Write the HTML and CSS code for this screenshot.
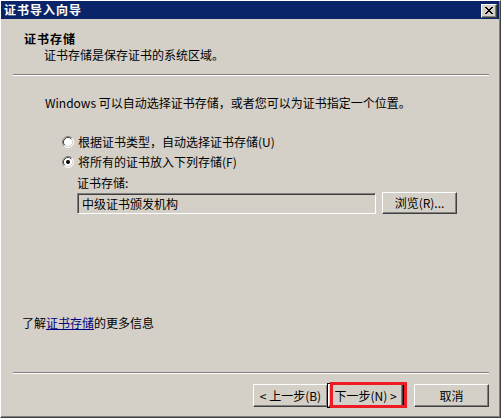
FILE: index.html
```html
<!DOCTYPE html>
<html lang="zh-CN">
<head>
<meta charset="utf-8">
<title>证书导入向导</title>
<link rel="stylesheet" href="styles.css">
</head>
<body>
<div class="window">
  <div class="frame">
    <div class="titlebar">
      <span class="title">证书导入向导</span>
      <span class="close">
        <svg width="8" height="7" viewBox="0 0 8 7" shape-rendering="crispEdges">
          <g fill="#000">
            <rect x="0" y="0" width="2" height="1"/><rect x="6" y="0" width="2" height="1"/>
            <rect x="1" y="1" width="2" height="1"/><rect x="5" y="1" width="2" height="1"/>
            <rect x="2" y="2" width="4" height="1"/>
            <rect x="3" y="3" width="2" height="1"/>
            <rect x="2" y="4" width="4" height="1"/>
            <rect x="1" y="5" width="2" height="1"/><rect x="5" y="5" width="2" height="1"/>
            <rect x="0" y="6" width="2" height="1"/><rect x="6" y="6" width="2" height="1"/>
          </g>
        </svg>
      </span>
    </div>
    <div class="client">
      <div class="header">
        <div class="h-title">证书存储</div>
        <div class="h-sub">证书存储是保存证书的系统区域。</div>
      </div>
      <div class="sep"></div>
      <div class="body">
        <p class="intro">Windows 可以自动选择证书存储，或者您可以为证书指定一个位置。</p>
        <div class="options">
          <div class="radio">
            <svg class="radio-icon" width="12" height="12" viewBox="0 0 12 12">
              <circle cx="6" cy="6" r="5" fill="#fff"/>
              <path d="M2.11 9.89 A5.5 5.5 0 0 1 9.89 2.11" fill="none" stroke="#808080"/>
              <path d="M9.89 2.11 A5.5 5.5 0 0 1 2.11 9.89" fill="none" stroke="#fff"/>
              <path d="M2.82 9.18 A4.5 4.5 0 0 1 9.18 2.82" fill="none" stroke="#404040"/>
              <path d="M9.18 2.82 A4.5 4.5 0 0 1 2.82 9.18" fill="none" stroke="#D4D0C8"/>
            </svg>
            <span>根据证书类型，自动选择证书存储(U)</span>
          </div>
          <div class="radio">
            <svg class="radio-icon" width="12" height="12" viewBox="0 0 12 12">
              <circle cx="6" cy="6" r="5" fill="#fff"/>
              <path d="M2.11 9.89 A5.5 5.5 0 0 1 9.89 2.11" fill="none" stroke="#808080"/>
              <path d="M9.89 2.11 A5.5 5.5 0 0 1 2.11 9.89" fill="none" stroke="#fff"/>
              <path d="M2.82 9.18 A4.5 4.5 0 0 1 9.18 2.82" fill="none" stroke="#404040"/>
              <path d="M9.18 2.82 A4.5 4.5 0 0 1 2.82 9.18" fill="none" stroke="#D4D0C8"/>
              <circle cx="6" cy="6" r="2" fill="#000"/>
            </svg>
            <span>将所有的证书放入下列存储(F)</span>
          </div>
        </div>
        <div class="store">
          <div class="store-label">证书存储:</div>
          <div class="store-row">
            <div class="field">中级证书颁发机构</div>
            <div class="btn browse">浏览(R)...</div>
          </div>
        </div>
        <p class="more">了解<a class="link">证书存储</a>的更多信息</p>
      </div>
      <div class="footer">
        <div class="sep"></div>
        <div class="buttons">
          <div class="btn">&lt; 上一步(B)</div>
          <div class="btn default">下一步(N) &gt;<span class="highlight"></span></div>
          <div class="btn cancel">取消</div>
        </div>
      </div>
    </div>
  </div>
</div>
</body>
</html>
```

FILE: styles.css
```css
* { box-sizing: border-box; }

html, body {
  margin: 0;
  padding: 0;
  background: #D4D0C8;
}

body {
  font-family: "Noto Sans CJK SC", "Noto Sans", sans-serif;
  font-size: 12px;
  color: #000;
}

.window {
  width: 501px;
  height: 418px;
  border-top: 1px solid #fff;
  border-left: 1px solid #fff;
  border-right: 1px solid #404040;
  border-bottom: 1px solid #404040;
}

.frame {
  height: 100%;
  display: flex;
  flex-direction: column;
  border-right: 1px solid #808080;
  border-bottom: 1px solid #808080;
}

.titlebar {
  height: 18px;
  flex: none;
  background: #0A246A;
  display: flex;
  justify-content: space-between;
  align-items: flex-start;
  padding: 0 2px 0 3px;
}

.title {
  color: #fff;
  font-weight: bold;
  font-size: 12px;
  line-height: 18px;
  letter-spacing: 1px;
}

.close {
  margin-top: 3px;
  width: 16px;
  height: 14px;
  background: #D4D0C8;
  border: 1px solid;
  border-color: #fff #404040 #404040 #fff;
  box-shadow: inset -1px -1px #808080;
  display: flex;
  align-items: center;
  justify-content: center;
  padding: 0 1px 1px 0;
}

.close svg { display: block; }

.client {
  flex: 1;
  display: flex;
  flex-direction: column;
  background: #D4D0C8;
}

.header {
  padding: 13px 0 12px 23px;
  line-height: 14px;
}

.h-title {
  font-weight: bold;
  letter-spacing: 1px;
}

.h-sub {
  margin-top: 2px;
  padding-left: 20px;
}

.sep {
  height: 2px;
  margin: 0 10px 0 12px;
  border-top: 1px solid #808080;
  border-bottom: 1px solid #fff;
}

.body {
  line-height: 14px;
}

.intro {
  margin: 20px 0 0 44px;
}

.options {
  margin: 25px 0 0 61px;
  display: flex;
  flex-direction: column;
  gap: 6px;
}

.radio {
  display: flex;
  align-items: center;
  gap: 4px;
  height: 14px;
}

.radio-icon { display: block; flex: none; }

.store {
  margin: 7px 0 0 76px;
}

.store-row {
  margin-top: 2px;
  display: flex;
  align-items: flex-start;
  gap: 6px;
}

.field {
  margin-top: 1px;
  width: 299px;
  height: 21px;
  border: 1px solid;
  border-color: #808080 #fff #fff #808080;
  box-shadow: inset 1px 1px #404040, inset -1px -1px #D4D0C8;
  padding: 3px 3px 0 4px;
  line-height: 14px;
}

.btn {
  position: relative;
  width: 75px;
  height: 23px;
  background: #D4D0C8;
  border: 1px solid;
  border-color: #fff #404040 #404040 #fff;
  box-shadow: inset -1px -1px #808080;
  display: flex;
  align-items: center;
  justify-content: center;
  line-height: 14px;
  white-space: nowrap;
}

.browse {
  height: 22px;
}

.more {
  margin: 102px 0 0 21px;
}

.link {
  color: #000080;
  text-decoration: underline;
}

.footer {
  margin-top: auto;
  padding-bottom: 9px;
}

.buttons {
  margin-top: 10px;
  display: flex;
  justify-content: flex-end;
  padding-right: 10px;
}

.cancel {
  margin-left: 11px;
}

.default {
  outline: 1px solid #000;
}

.highlight {
  position: absolute;
  left: 1px;
  top: -3px;
  width: 77px;
  height: 26px;
  border: 3px solid #ED1C24;
}
```
